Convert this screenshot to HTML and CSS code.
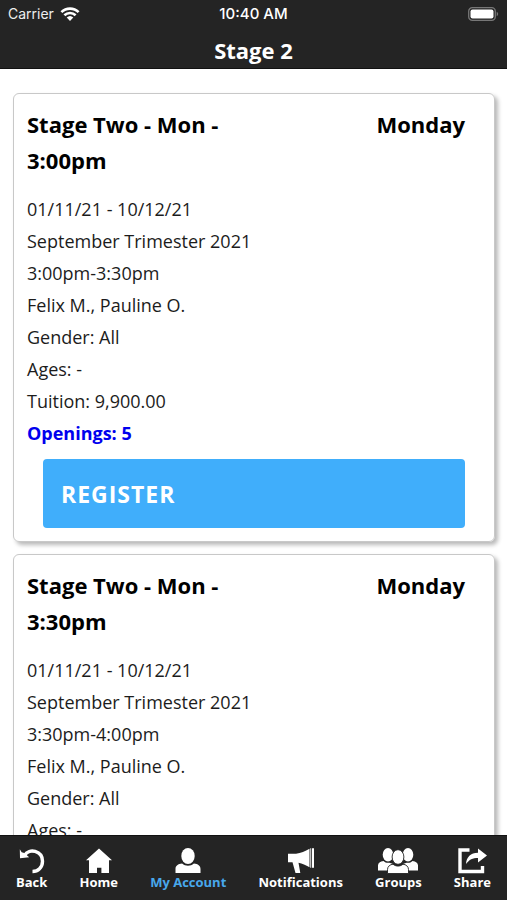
FILE: index.html
```html
<!DOCTYPE html>
<html lang="en">
<head>
<meta charset="utf-8">
<meta name="viewport" content="width=device-width, initial-scale=1">
<title>Stage 2</title>
<link rel="stylesheet" href="styles.css">
</head>
<body>
<div class="app">
  <header class="top">
    <div class="status">
      <span class="carrier">Carrier
        <svg width="20" height="14" viewBox="0 0 20 14" aria-hidden="true"><g fill="none" stroke="#fff" stroke-width="2.6"><path d="M1.4 5.200a12.200 12.200 0 0 1 17.200 0"/><path d="M4.400 8.300a8 8 0 0 1 11.200 0"/></g><path d="M10 14 6.700 10.600a4.800 4.800 0 0 1 6.600 0z" fill="#fff"/></svg>
      </span>
      <span class="time">10:40 AM</span>
      <span class="battery"><svg width="31" height="14" viewBox="0 0 31 14" aria-hidden="true"><rect x=".7" y=".7" width="26.600" height="12.600" rx="3.600" fill="none" stroke="#777" stroke-width="1.300"/><rect x="2.500" y="2.500" width="23" height="9" rx="2" fill="#fff"/><path d="M28.700 4.800c2 .8 2 3.600 0 4.400z" fill="#777"/></svg></span>
    </div>
    <h1>Stage 2</h1>
  </header>

  <main class="classes">
    <article class="card">
      <div class="card-head"><h2>Stage Two - Mon - 3:00pm</h2><span class="day">Monday</span></div>
      <ul class="details">
        <li>01/11/21 - 10/12/21</li>
        <li>September Trimester 2021</li>
        <li>3:00pm-3:30pm</li>
        <li>Felix M., Pauline O.</li>
        <li>Gender: All</li>
        <li>Ages: -</li>
        <li>Tuition: 9,900.00</li>
        <li class="openings">Openings: 5</li>
      </ul>
      <button class="register" type="button">REGISTER</button>
    </article>
    <article class="card">
      <div class="card-head"><h2>Stage Two - Mon - 3:30pm</h2><span class="day">Monday</span></div>
      <ul class="details">
        <li>01/11/21 - 10/12/21</li>
        <li>September Trimester 2021</li>
        <li>3:30pm-4:00pm</li>
        <li>Felix M., Pauline O.</li>
        <li>Gender: All</li>
        <li>Ages: -</li>
      </ul>
    </article>
  </main>

  <nav class="tabs">
    <a href="#back"><svg width="26" height="26" viewBox="0 0 26 26" aria-hidden="true"><path d="M5.500 7.500C10-.5 23.500 2.800 23.500 13.300c0 6.400-4.500 10.200-10 10.200" fill="none" stroke="#fff" stroke-width="3.400"/><path d="M.8 1.200 2.700 4.200 5.200 5l5 4.300L1 10.200z" fill="#fff"/></svg>Back</a>
    <a href="#home"><svg width="26" height="26" viewBox="0 0 26 26" aria-hidden="true"><path d="M13 .5 26 12.200h-3V25h-7.600v-5.300h-4.400V25H3V12.200H0z" fill="#fff"/></svg>Home</a>
    <a href="#account" class="active" aria-current="page"><svg width="26" height="26" viewBox="0 0 26 26" aria-hidden="true"><g fill="#fff"><ellipse cx="13" cy="8" rx="6.700" ry="8"/><path d="M.5 25v-4c0-3.200 2.500-5.200 6.600-5.500 3.400 3 8.400 3 11.800 0 4.100.3 6.600 2.300 6.600 5.500v4z"/></g></svg>My Account</a>
    <a href="#notifications"><svg width="28" height="26" viewBox="0 0 28 26" aria-hidden="true"><g fill="#fff"><path d="M1 5.800h8C14 5 18 3.300 22.500.8v18.400c-4-2.200-7-3.700-11-4.400L13.300 25H8.500L5.500 14.300H1z"/><path d="M23.300.2h.9v19.600h-.9zM25 .2h2v19.600h-2z"/></g></svg>Notifications</a>
    <a href="#groups"><svg width="40" height="26" viewBox="0 0 40 26" aria-hidden="true"><g fill="#fff"><ellipse cx="10" cy="6.800" rx="5.300" ry="6.800"/><ellipse cx="30" cy="6.800" rx="5.300" ry="6.800"/><path d="M0 22.500v-5c0-2.600 2.200-4.300 5.500-4.600 1.500 1.500 3.500 2.200 6 1.800L15 16c-3 .8-5 3-5.200 6.500zM40 22.500v-5c0-2.600-2.200-4.300-5.500-4.600-1.500 1.500-3.500 2.200-6 1.800L25 16c3 .8 5 3 5.200 6.500z"/></g><g fill="#fff" stroke="#242424" stroke-width=".9"><ellipse cx="20" cy="9" rx="5.900" ry="7.300"/><path d="M9.500 25.500v-4c0-3 2.500-5 5.500-5.300 3 2.500 7 2.500 10 0 3 .3 5.500 2.300 5.500 5.300v4z"/></g></svg>Groups</a>
    <a href="#share"><svg width="29" height="26" viewBox="0 0 29 26" aria-hidden="true"><path d="M11.500 2H2v21.500h22.500V18" fill="none" stroke="#fff" stroke-width="3.400"/><path d="M8 16C8.500 9 12.500 5 20 4.800V.5L29 7.500l-9 7V10C14.500 10 11.500 11.500 8 16z" fill="#fff"/></svg>Share</a>
  </nav>
</div>
</body>
</html>
```
FILE: styles.css
```css
* { box-sizing: border-box; }

body {
  margin: 0;
  background: #fff;
  color: #000;
  font-family: "Open Sans", "Noto Sans", sans-serif;
}

h1, h2, ul { margin: 0; padding: 0; }

svg { display: block; }

.app {
  display: flex;
  flex-direction: column;
  height: 100vh;
}

.top {
  flex: none;
  background: #242424;
  color: #fff;
  border-bottom: 1px solid #111;
}

.status {
  display: grid;
  grid-template-columns: 1fr auto 1fr;
  align-items: center;
  height: 27px;
  padding: 0 8px;
  font: 14px/20px Inter, "Liberation Sans", sans-serif;
}

.carrier {
  display: flex;
  align-items: center;
  gap: 6px;
  color: #eee;
}

.time {
  font-size: 15px;
  font-weight: 500;
}

.battery { justify-self: end; }

h1 {
  padding-top: 5px;
  font-size: 22px;
  line-height: 36px;
  text-align: center;
}

.classes {
  flex: 1;
  min-height: 0;
  overflow: hidden;
  display: flex;
  flex-direction: column;
  gap: 12px;
  padding: 24px 12px 0 13px;
}

.card {
  flex: none;
  padding: 12px 13px 13px;
  border: 1px solid #c8c8c8;
  border-radius: 6px;
  box-shadow: 3px 3px 4px rgba(0, 0, 0, .28);
}

.card-head {
  display: flex;
  justify-content: space-between;
  padding-right: 16px;
  font-size: 22px;
  line-height: 36px;
  font-weight: 700;
}

h2 {
  width: 50%;
  font-size: inherit;
}

.details {
  margin: 15px 0 10px;
  list-style: none;
  font-size: 18px;
  line-height: 32px;
  color: #1c1c1c;
}

.openings {
  color: #00e;
  font-weight: 700;
}

.register {
  display: block;
  width: calc(100% - 32px);
  margin: 0 16px;
  padding: 17px 18px 15px;
  border: 0;
  border-radius: 4px;
  background: #40aefb;
  color: #fff;
  font: 700 23px/37px "Open Sans", sans-serif;
  letter-spacing: 1px;
  text-align: left;
}

.tabs {
  flex: none;
  display: flex;
  justify-content: space-between;
  height: 65px;
  padding: 12px 16px 0;
  background: #242424;
  border-top: 1px solid #111;
}

.tabs a {
  display: flex;
  flex-direction: column;
  align-items: center;
  color: #fff;
  font-size: 13px;
  line-height: 16px;
  font-weight: 700;
  text-decoration: none;
}

.tabs .active { color: #48a8ec; }
```
